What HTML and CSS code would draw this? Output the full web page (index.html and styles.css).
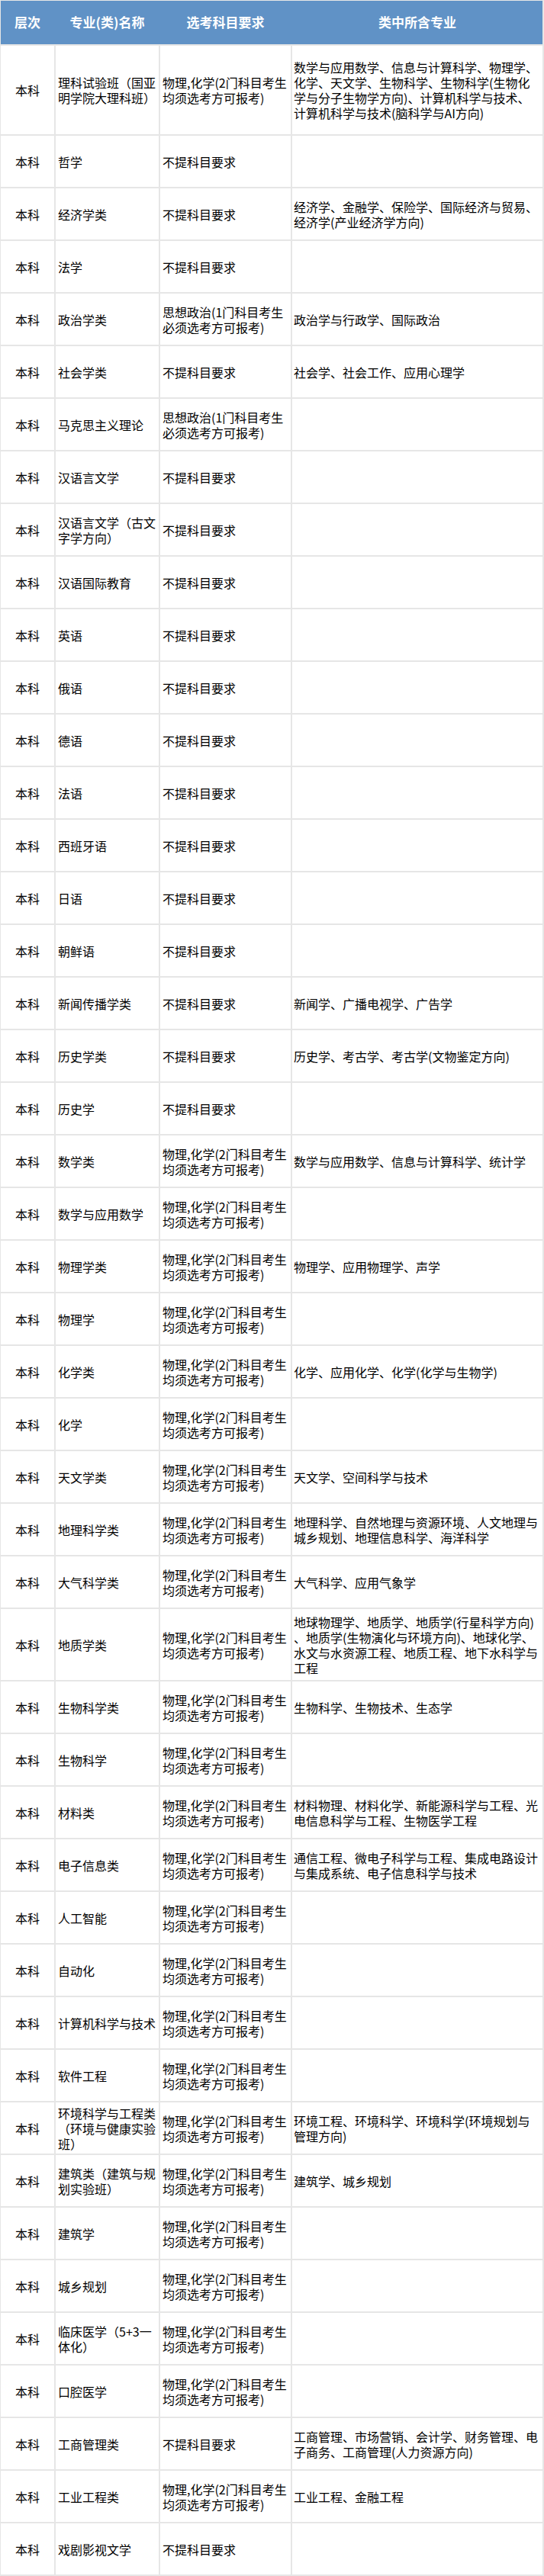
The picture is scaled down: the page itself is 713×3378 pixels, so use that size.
FILE: index.html
```html
<!DOCTYPE html>
<html lang="zh-CN">
<head>
<meta charset="utf-8">
<title>专业选考科目要求</title>
<link rel="stylesheet" href="styles.css">
</head>
<body>
<div class="sheet">
  <div class="head">
    <div class="hcell">层次</div>
    <div class="hcell">专业(类)名称</div>
    <div class="hcell">选考科目要求</div>
    <div class="hcell">类中所含专业</div>
  </div>

  <div class="row row--first"><div class="c lvl">本科</div><div class="c">理科试验班（国亚明学院大理科班）</div><div class="c">物理,化学(2门科目考生均须选考方可报考)</div><div class="c sub">数学与应用数学、信息与计算科学、物理学、化学、天文学、生物科学、生物科学(生物化学与分子生物学方向)、计算机科学与技术、计算机科学与技术(脑科学与AI方向)</div></div>
  <div class="row"><div class="c lvl">本科</div><div class="c">哲学</div><div class="c">不提科目要求</div><div class="c sub"></div></div>
  <div class="row"><div class="c lvl">本科</div><div class="c">经济学类</div><div class="c">不提科目要求</div><div class="c sub">经济学、金融学、保险学、国际经济与贸易、经济学(产业经济学方向)</div></div>
  <div class="row"><div class="c lvl">本科</div><div class="c">法学</div><div class="c">不提科目要求</div><div class="c sub"></div></div>
  <div class="row"><div class="c lvl">本科</div><div class="c">政治学类</div><div class="c">思想政治(1门科目考生必须选考方可报考)</div><div class="c sub">政治学与行政学、国际政治</div></div>
  <div class="row"><div class="c lvl">本科</div><div class="c">社会学类</div><div class="c">不提科目要求</div><div class="c sub">社会学、社会工作、应用心理学</div></div>
  <div class="row"><div class="c lvl">本科</div><div class="c">马克思主义理论</div><div class="c">思想政治(1门科目考生必须选考方可报考)</div><div class="c sub"></div></div>
  <div class="row"><div class="c lvl">本科</div><div class="c">汉语言文学</div><div class="c">不提科目要求</div><div class="c sub"></div></div>
  <div class="row"><div class="c lvl">本科</div><div class="c">汉语言文学（古文字学方向）</div><div class="c">不提科目要求</div><div class="c sub"></div></div>
  <div class="row"><div class="c lvl">本科</div><div class="c">汉语国际教育</div><div class="c">不提科目要求</div><div class="c sub"></div></div>
  <div class="row"><div class="c lvl">本科</div><div class="c">英语</div><div class="c">不提科目要求</div><div class="c sub"></div></div>
  <div class="row"><div class="c lvl">本科</div><div class="c">俄语</div><div class="c">不提科目要求</div><div class="c sub"></div></div>
  <div class="row"><div class="c lvl">本科</div><div class="c">德语</div><div class="c">不提科目要求</div><div class="c sub"></div></div>
  <div class="row"><div class="c lvl">本科</div><div class="c">法语</div><div class="c">不提科目要求</div><div class="c sub"></div></div>
  <div class="row"><div class="c lvl">本科</div><div class="c">西班牙语</div><div class="c">不提科目要求</div><div class="c sub"></div></div>
  <div class="row"><div class="c lvl">本科</div><div class="c">日语</div><div class="c">不提科目要求</div><div class="c sub"></div></div>
  <div class="row"><div class="c lvl">本科</div><div class="c">朝鲜语</div><div class="c">不提科目要求</div><div class="c sub"></div></div>
  <div class="row"><div class="c lvl">本科</div><div class="c">新闻传播学类</div><div class="c">不提科目要求</div><div class="c sub">新闻学、广播电视学、广告学</div></div>
  <div class="row"><div class="c lvl">本科</div><div class="c">历史学类</div><div class="c">不提科目要求</div><div class="c sub">历史学、考古学、考古学(文物鉴定方向)</div></div>
  <div class="row"><div class="c lvl">本科</div><div class="c">历史学</div><div class="c">不提科目要求</div><div class="c sub"></div></div>
  <div class="row"><div class="c lvl">本科</div><div class="c">数学类</div><div class="c">物理,化学(2门科目考生均须选考方可报考)</div><div class="c sub">数学与应用数学、信息与计算科学、统计学</div></div>
  <div class="row"><div class="c lvl">本科</div><div class="c">数学与应用数学</div><div class="c">物理,化学(2门科目考生均须选考方可报考)</div><div class="c sub"></div></div>
  <div class="row"><div class="c lvl">本科</div><div class="c">物理学类</div><div class="c">物理,化学(2门科目考生均须选考方可报考)</div><div class="c sub">物理学、应用物理学、声学</div></div>
  <div class="row"><div class="c lvl">本科</div><div class="c">物理学</div><div class="c">物理,化学(2门科目考生均须选考方可报考)</div><div class="c sub"></div></div>
  <div class="row"><div class="c lvl">本科</div><div class="c">化学类</div><div class="c">物理,化学(2门科目考生均须选考方可报考)</div><div class="c sub">化学、应用化学、化学(化学与生物学)</div></div>
  <div class="row"><div class="c lvl">本科</div><div class="c">化学</div><div class="c">物理,化学(2门科目考生均须选考方可报考)</div><div class="c sub"></div></div>
  <div class="row"><div class="c lvl">本科</div><div class="c">天文学类</div><div class="c">物理,化学(2门科目考生均须选考方可报考)</div><div class="c sub">天文学、空间科学与技术</div></div>
  <div class="row"><div class="c lvl">本科</div><div class="c">地理科学类</div><div class="c">物理,化学(2门科目考生均须选考方可报考)</div><div class="c sub">地理科学、自然地理与资源环境、人文地理与城乡规划、地理信息科学、海洋科学</div></div>
  <div class="row"><div class="c lvl">本科</div><div class="c">大气科学类</div><div class="c">物理,化学(2门科目考生均须选考方可报考)</div><div class="c sub">大气科学、应用气象学</div></div>
  <div class="row row--tall"><div class="c lvl">本科</div><div class="c">地质学类</div><div class="c">物理,化学(2门科目考生均须选考方可报考)</div><div class="c sub">地球物理学、地质学、地质学(行星科学方向)、地质学(生物演化与环境方向)、地球化学、水文与水资源工程、地质工程、地下水科学与工程</div></div>
  <div class="row"><div class="c lvl">本科</div><div class="c">生物科学类</div><div class="c">物理,化学(2门科目考生均须选考方可报考)</div><div class="c sub">生物科学、生物技术、生态学</div></div>
  <div class="row"><div class="c lvl">本科</div><div class="c">生物科学</div><div class="c">物理,化学(2门科目考生均须选考方可报考)</div><div class="c sub"></div></div>
  <div class="row"><div class="c lvl">本科</div><div class="c">材料类</div><div class="c">物理,化学(2门科目考生均须选考方可报考)</div><div class="c sub">材料物理、材料化学、新能源科学与工程、光电信息科学与工程、生物医学工程</div></div>
  <div class="row"><div class="c lvl">本科</div><div class="c">电子信息类</div><div class="c">物理,化学(2门科目考生均须选考方可报考)</div><div class="c sub">通信工程、微电子科学与工程、集成电路设计与集成系统、电子信息科学与技术</div></div>
  <div class="row"><div class="c lvl">本科</div><div class="c">人工智能</div><div class="c">物理,化学(2门科目考生均须选考方可报考)</div><div class="c sub"></div></div>
  <div class="row"><div class="c lvl">本科</div><div class="c">自动化</div><div class="c">物理,化学(2门科目考生均须选考方可报考)</div><div class="c sub"></div></div>
  <div class="row"><div class="c lvl">本科</div><div class="c">计算机科学与技术</div><div class="c">物理,化学(2门科目考生均须选考方可报考)</div><div class="c sub"></div></div>
  <div class="row"><div class="c lvl">本科</div><div class="c">软件工程</div><div class="c">物理,化学(2门科目考生均须选考方可报考)</div><div class="c sub"></div></div>
  <div class="row"><div class="c lvl">本科</div><div class="c">环境科学与工程类（环境与健康实验班）</div><div class="c">物理,化学(2门科目考生均须选考方可报考)</div><div class="c sub">环境工程、环境科学、环境科学(环境规划与管理方向)</div></div>
  <div class="row"><div class="c lvl">本科</div><div class="c">建筑类（建筑与规划实验班）</div><div class="c">物理,化学(2门科目考生均须选考方可报考)</div><div class="c sub">建筑学、城乡规划</div></div>
  <div class="row"><div class="c lvl">本科</div><div class="c">建筑学</div><div class="c">物理,化学(2门科目考生均须选考方可报考)</div><div class="c sub"></div></div>
  <div class="row"><div class="c lvl">本科</div><div class="c">城乡规划</div><div class="c">物理,化学(2门科目考生均须选考方可报考)</div><div class="c sub"></div></div>
  <div class="row"><div class="c lvl">本科</div><div class="c">临床医学（5+3一体化）</div><div class="c">物理,化学(2门科目考生均须选考方可报考)</div><div class="c sub"></div></div>
  <div class="row"><div class="c lvl">本科</div><div class="c">口腔医学</div><div class="c">物理,化学(2门科目考生均须选考方可报考)</div><div class="c sub"></div></div>
  <div class="row"><div class="c lvl">本科</div><div class="c">工商管理类</div><div class="c">不提科目要求</div><div class="c sub">工商管理、市场营销、会计学、财务管理、电子商务、工商管理(人力资源方向)</div></div>
  <div class="row"><div class="c lvl">本科</div><div class="c">工业工程类</div><div class="c">物理,化学(2门科目考生均须选考方可报考)</div><div class="c sub">工业工程、金融工程</div></div>
  <div class="row"><div class="c lvl">本科</div><div class="c">戏剧影视文学</div><div class="c">不提科目要求</div><div class="c sub"></div></div>
</div>
</body>
</html>
```

FILE: styles.css
```css
html, body {
  margin: 0;
  padding: 0;
  background: #ffffff;
}

body {
  font-family: "Noto Sans CJK SC", "Noto Sans", "Liberation Sans", sans-serif;
  font-size: 16px;
  line-height: 20px;
  color: #000000;
}

.sheet {
  width: 713px;
  box-sizing: border-box;
  padding: 1px 2px 2px 1px;
  background: #e6e6e6;
  display: flex;
  flex-direction: column;
  gap: 2px;
}

.head {
  display: grid;
  grid-template-columns: 70px 135px 171px 328px;
  column-gap: 2px;
  height: 57px;
  background: #6092c6;
}

.hcell {
  display: flex;
  align-items: center;
  justify-content: center;
  color: #ffffff;
  font-size: 17px;
  font-weight: 700;
  padding-bottom: 1px;
}

.row {
  display: grid;
  grid-template-columns: 70px 135px 171px 328px;
  column-gap: 2px;
  min-height: 67px;
}

.row--first {
  min-height: 116px;
}

.row--tall {
  min-height: 93px;
}

.c {
  background: #ffffff;
  display: flex;
  align-items: center;
  padding: 3px 3px;
  box-sizing: border-box;
  word-break: break-all;
}

.c.lvl {
  justify-content: center;
  padding: 3px 0;
}

.c.sub {
  padding-left: 2px;
  padding-right: 2px;
  line-break: anywhere;
}
```
